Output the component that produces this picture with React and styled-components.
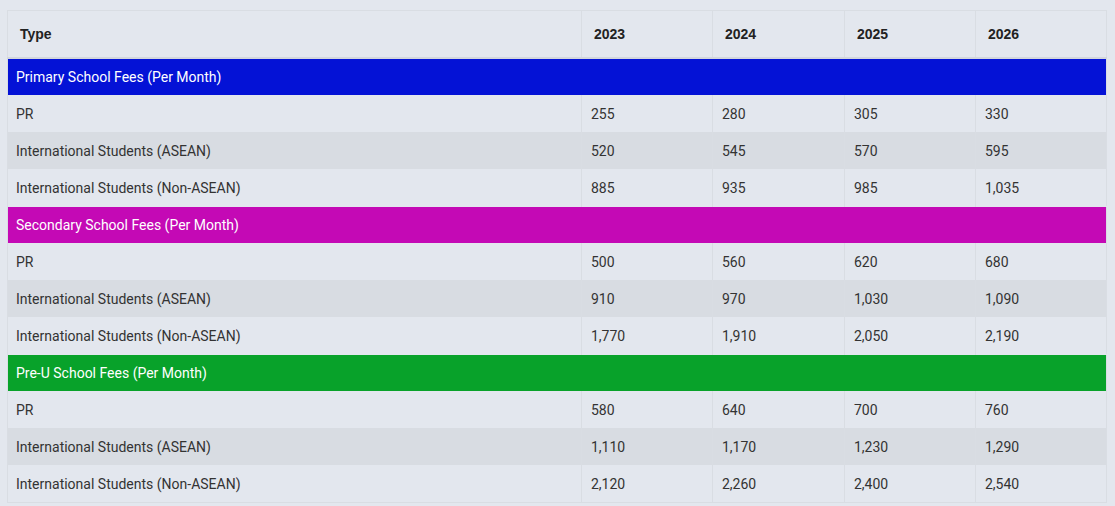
import React from "react";
import styled, { createGlobalStyle } from "styled-components";

const GlobalStyle = createGlobalStyle`
  body {
    margin: 0;
    background: #e3e7ee;
    font-family: Roboto, "Liberation Sans", sans-serif;
  }
`;

const Page = styled.div`
  padding: 10px 0 0 7px;
`;

const Table = styled.table`
  width: 1100px;
  border-collapse: collapse;
  table-layout: fixed;
  font-size: 14px;
  color: #333;
  border: 1px solid #d9dde3;
`;

const Col = styled.col`
  width: ${(p) => p.$width}px;
`;

const HeadCell = styled.th`
  height: 46px;
  padding: 0 12px;
  text-align: left;
  font-family: "Liberation Sans", Arial, sans-serif;
  font-weight: bold;
  font-size: 14px;
  color: #222;
  border-left: 1px solid #d9dde3;
  border-bottom: 2px solid #d2d6dc;
`;

const GroupCell = styled.td`
  height: 36px;
  padding: 0 8px;
  background: ${(p) => p.$color};
  color: #fff;
  border-top: 1px solid #e3e7ee;
`;

const Row = styled.tr`
  background: ${(p) => (p.$alt ? "#d8dce2" : "#e3e7ee")};
`;

const Cell = styled.td`
  height: 37px;
  padding: 0 ${(p) => (p.$first ? "8px" : "9px")};
  border-left: 1px solid #d9dde3;
`;

const widths = [574, 131, 132, 131, 131];
const years = ["2023", "2024", "2025", "2026"];

const groups = [
  {
    title: "Primary School Fees (Per Month)",
    color: "#0412d6",
    rows: [
      ["PR", "255", "280", "305", "330"],
      ["International Students (ASEAN)", "520", "545", "570", "595"],
      ["International Students (Non-ASEAN)", "885", "935", "985", "1,035"],
    ],
  },
  {
    title: "Secondary School Fees (Per Month)",
    color: "#c409b5",
    rows: [
      ["PR", "500", "560", "620", "680"],
      ["International Students (ASEAN)", "910", "970", "1,030", "1,090"],
      ["International Students (Non-ASEAN)", "1,770", "1,910", "2,050", "2,190"],
    ],
  },
  {
    title: "Pre-U School Fees (Per Month)",
    color: "#08a22a",
    rows: [
      ["PR", "580", "640", "700", "760"],
      ["International Students (ASEAN)", "1,110", "1,170", "1,230", "1,290"],
      ["International Students (Non-ASEAN)", "2,120", "2,260", "2,400", "2,540"],
    ],
  },
];

const App = () => {
  return (
    <Page>
      <GlobalStyle />
      <Table>
        <colgroup>
          {widths.map((w, i) => (
            <Col key={i} $width={w} />
          ))}
        </colgroup>
        <thead>
          <tr>
            <HeadCell>Type</HeadCell>
            {years.map((y) => (
              <HeadCell key={y}>{y}</HeadCell>
            ))}
          </tr>
        </thead>
        <tbody>
          {groups.map((g) => (
            <React.Fragment key={g.title}>
              <tr>
                <GroupCell colSpan={5} $color={g.color}>
                  {g.title}
                </GroupCell>
              </tr>
              {g.rows.map((r, i) => (
                <Row key={i} $alt={i === 1}>
                  {r.map((v, j) => (
                    <Cell key={j} $first={j === 0}>
                      {v}
                    </Cell>
                  ))}
                </Row>
              ))}
            </React.Fragment>
          ))}
        </tbody>
      </Table>
    </Page>
  );
};

export default App;
